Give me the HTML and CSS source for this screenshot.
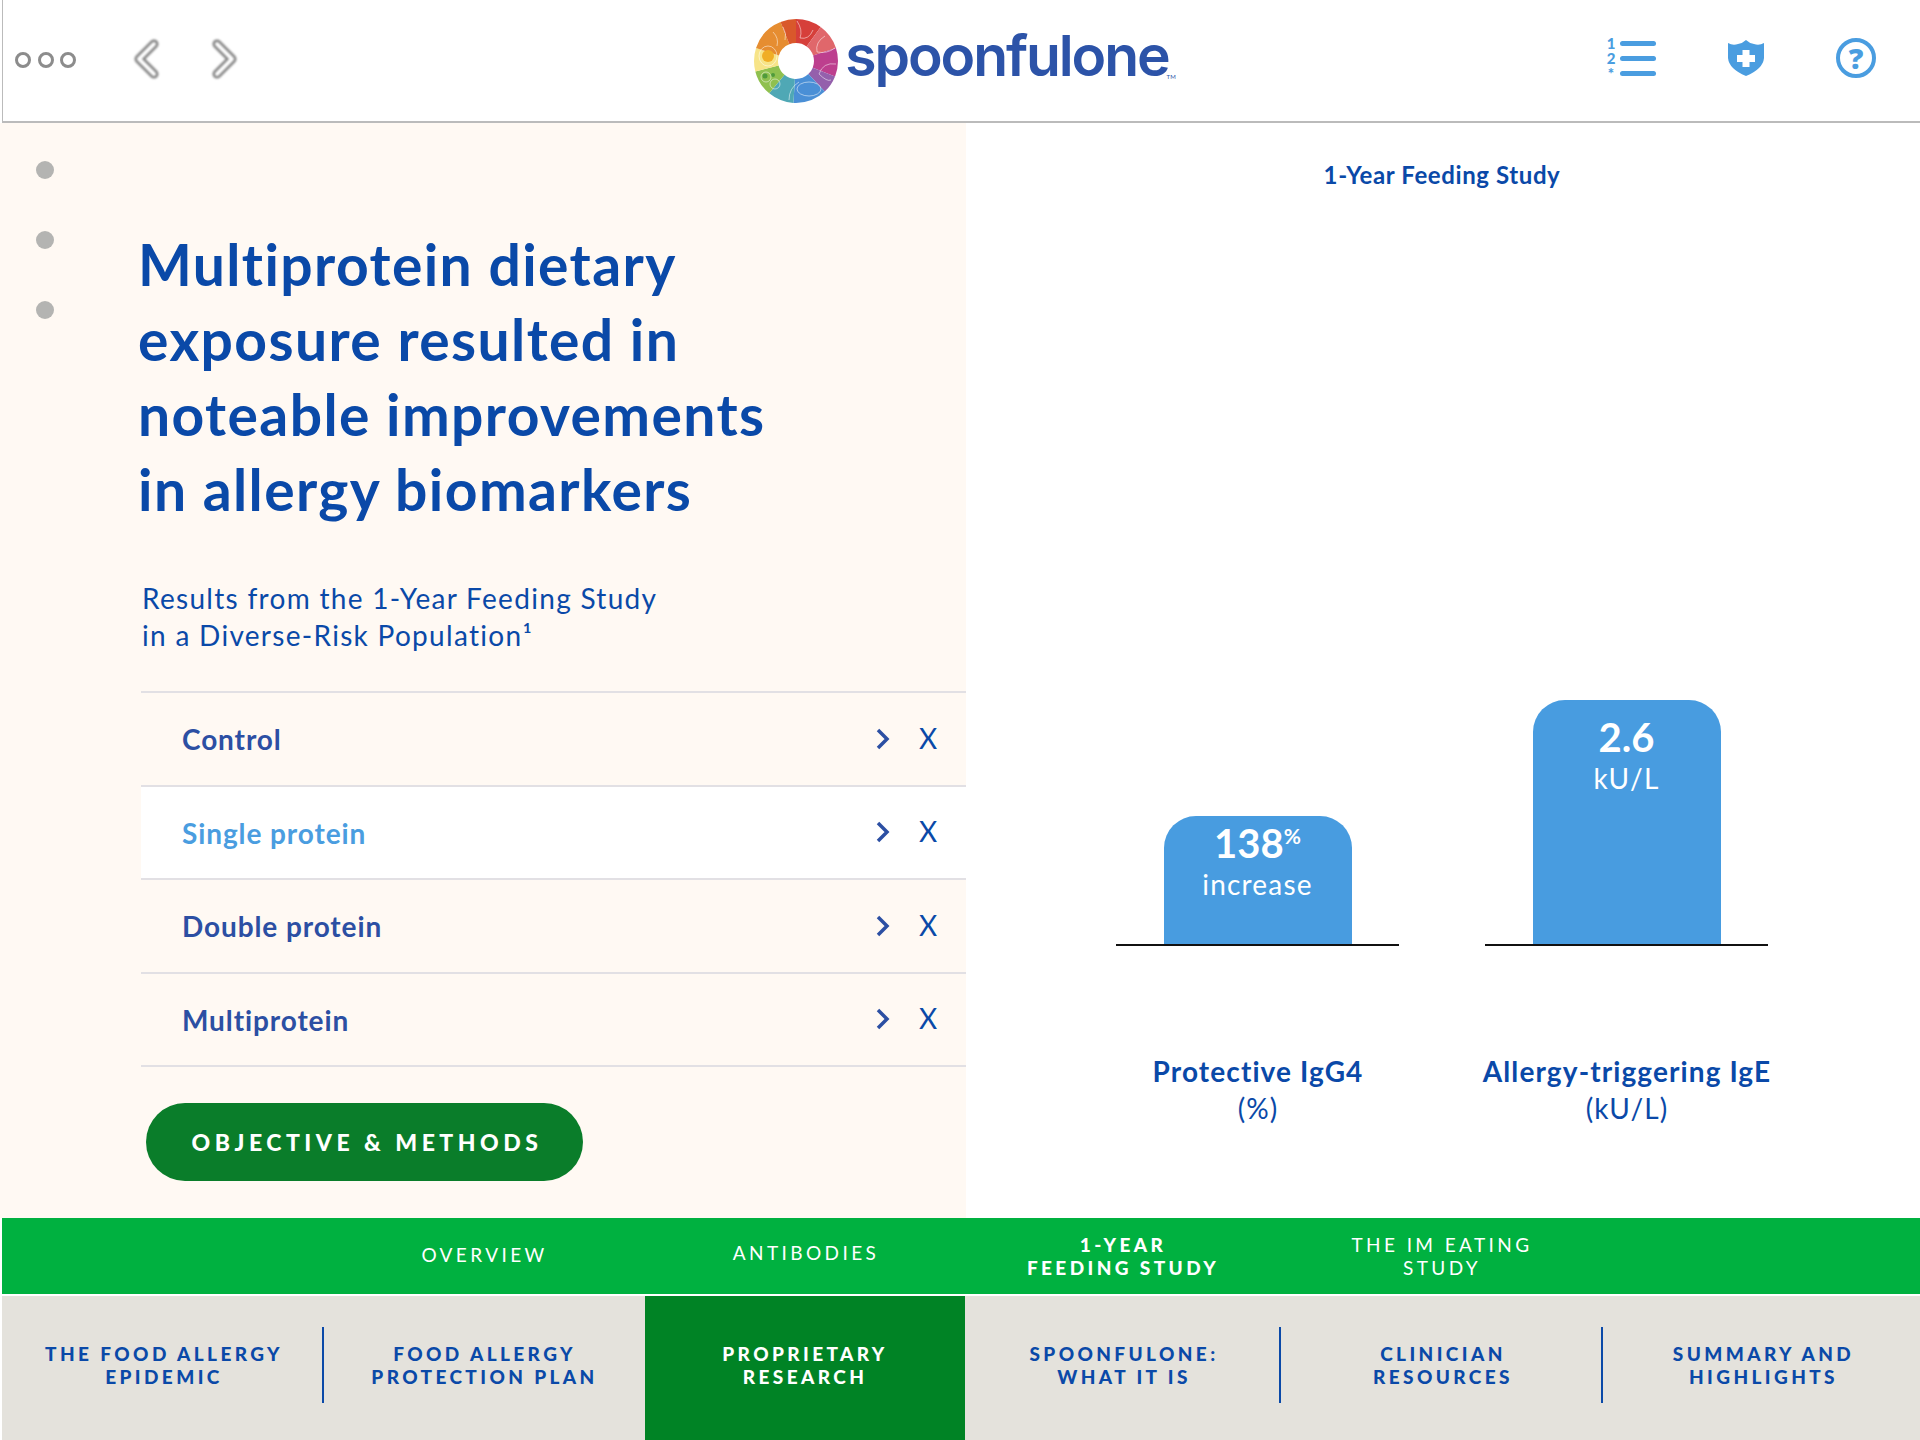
FILE: index.html
```html
<!DOCTYPE html>
<html lang="en">

<head>
  <meta charset="UTF-8">
  <meta name="viewport" content="width=device-width, initial-scale=1.0">
  <title>SpoonfulOne - 1-Year Feeding Study</title>
  <link rel="stylesheet" href="styles.css">
</head>

<body>

  <header class="top-bar">

    <div class="top-left">
      <svg class="dots-icon" width="62" height="18" viewBox="0 0 62 18">
        <circle cx="8" cy="9" r="6.5"></circle>
        <circle cx="31" cy="9" r="6.5"></circle>
        <circle cx="53" cy="9" r="6.5"></circle>
      </svg>
      <svg class="arrow-icon" width="30" height="44" viewBox="0 0 30 44">
        <polyline class="arrow-edge" points="23,6 8,21 23,36"></polyline>
        <polyline class="arrow-fill" points="23,6 8,21 23,36"></polyline>
      </svg>
      <svg class="arrow-icon" width="30" height="44" viewBox="0 0 30 44">
        <polyline class="arrow-edge" points="7,6 22,21 7,36"></polyline>
        <polyline class="arrow-fill" points="7,6 22,21 7,36"></polyline>
      </svg>
    </div>

    <div class="logo">
      <svg class="logo-ring" width="86" height="86" viewBox="0 0 86 86">
        <g fill="none" stroke-width="24" transform="rotate(-90 43 43)">
          <circle cx="43" cy="43" r="30" pathLength="100" stroke="#d63f3a" stroke-dasharray="10 90"></circle>
          <circle cx="43" cy="43" r="30" pathLength="100" stroke="#e0676b" stroke-dasharray="10 90" stroke-dashoffset="-10"></circle>
          <circle cx="43" cy="43" r="30" pathLength="100" stroke="#bd3f8e" stroke-dasharray="11 89" stroke-dashoffset="-20"></circle>
          <circle cx="43" cy="43" r="30" pathLength="100" stroke="#9460ac" stroke-dasharray="7 93" stroke-dashoffset="-31"></circle>
          <circle cx="43" cy="43" r="30" pathLength="100" stroke="#4a8fd6" stroke-dasharray="13 87" stroke-dashoffset="-38"></circle>
          <circle cx="43" cy="43" r="30" pathLength="100" stroke="#4fa8b5" stroke-dasharray="10 90" stroke-dashoffset="-51"></circle>
          <circle cx="43" cy="43" r="30" pathLength="100" stroke="#8fc04f" stroke-dasharray="10 90" stroke-dashoffset="-61"></circle>
          <circle cx="43" cy="43" r="30" pathLength="100" stroke="#f7e488" stroke-dasharray="9 91" stroke-dashoffset="-71"></circle>
          <circle cx="43" cy="43" r="30" pathLength="100" stroke="#e68d31" stroke-dasharray="14 86" stroke-dashoffset="-80"></circle>
          <circle cx="43" cy="43" r="30" pathLength="100" stroke="#d9582b" stroke-dasharray="6 94" stroke-dashoffset="-94"></circle>
        </g>
        <circle cx="15" cy="38" r="6" fill="#f0ae26"></circle>
        <circle cx="12" cy="58" r="2.500" fill="#4f9a3c"></circle>
        <circle cx="20" cy="57" r="2" fill="#4f9a3c"></circle>
        <g fill="none" stroke="#fff" stroke-opacity="0.5" stroke-width="1">
          <path d="M44 3 Q50 12 47 20 Q56 22 60 12"></path>
          <path d="M72 18 Q62 24 64 34 Q74 36 82 30"></path>
          <path d="M83 46 Q70 44 66 56 Q74 64 78 62"></path>
          <ellipse cx="56" cy="71" rx="12" ry="7"></ellipse>
          <path d="M46 64 Q36 70 36 82"></path>
          <path d="M20 14 Q26 20 24 28 M30 9 Q34 16 32 22"></path>
          <ellipse cx="15" cy="38" rx="9" ry="10"></ellipse>
          <circle cx="13" cy="59" r="5"></circle>
          <circle cx="22" cy="66" r="5"></circle>
        </g>
      </svg>
      <span class="logo-name">spoonfulone</span><span class="logo-tm">TM</span>
    </div>

    <div class="top-right">
      <div class="list-icon">
        <div class="list-row"><span class="list-mark">1</span><span class="list-line"></span></div>
        <div class="list-row"><span class="list-mark">2</span><span class="list-line"></span></div>
        <div class="list-row"><span class="list-mark">*</span><span class="list-line"></span></div>
      </div>
      <svg width="36" height="36" viewBox="0 0 36 36">
        <path fill="#4a9de0" d="M0 3 Q5 6 10 4 Q15 3 18 0 Q21 3 26 4 Q31 6 36 3 L36 18 Q35 29 18 36 Q1 29 0 18 Z"></path>
        <path fill="#fff" d="M14.500 10 H21.500 V15 H27 V22 H21.500 V27 H14.500 V22 H9 V15 H14.500 Z"></path>
      </svg>
      <div class="help-icon">?</div>
    </div>

  </header>

  <main class="content">

    <section class="left-panel">

      <div class="side-dots">
        <span class="side-dot"></span>
        <span class="side-dot"></span>
        <span class="side-dot"></span>
      </div>

      <div class="left-main">
        <h1 class="title">
          Multiprotein dietary<br>
          exposure resulted in<br>
          noteable improvements<br>
          in allergy biomarkers
        </h1>

        <p class="subtitle">
          Results from the 1-Year Feeding Study<br>
          in a Diverse-Risk Population&#185;
        </p>

        <ul class="groups">
          <li class="group">
            <span class="group-name">Control</span>
            <svg class="group-arrow" width="14" height="22" viewBox="0 0 14 22"><polyline points="2,2 11,11 2,20"></polyline></svg>
            <span class="group-x">X</span>
          </li>
          <li class="group group-active">
            <span class="group-name">Single protein</span>
            <svg class="group-arrow" width="14" height="22" viewBox="0 0 14 22"><polyline points="2,2 11,11 2,20"></polyline></svg>
            <span class="group-x">X</span>
          </li>
          <li class="group">
            <span class="group-name">Double protein</span>
            <svg class="group-arrow" width="14" height="22" viewBox="0 0 14 22"><polyline points="2,2 11,11 2,20"></polyline></svg>
            <span class="group-x">X</span>
          </li>
          <li class="group">
            <span class="group-name">Multiprotein</span>
            <svg class="group-arrow" width="14" height="22" viewBox="0 0 14 22"><polyline points="2,2 11,11 2,20"></polyline></svg>
            <span class="group-x">X</span>
          </li>
        </ul>

        <button class="methods-button">OBJECTIVE &amp; METHODS</button>
      </div>

    </section>

    <section class="right-panel">

      <p class="chart-title">1-Year Feeding Study</p>

      <div class="chart">

        <div class="chart-col">
          <div class="bar-area">
            <div class="bar" style="height: 128px">
              <span class="bar-value">138<sup class="bar-percent">%</sup></span>
              <span class="bar-unit">increase</span>
            </div>
          </div>
          <p class="chart-label"><b>Protective IgG4</b><br>(%)</p>
        </div>

        <div class="chart-col">
          <div class="bar-area">
            <div class="bar bar-tall" style="height: 244px">
              <span class="bar-value">2.6</span>
              <span class="bar-unit">kU/L</span>
            </div>
          </div>
          <p class="chart-label"><b>Allergy-triggering IgE</b><br>(kU/L)</p>
        </div>

      </div>

    </section>

  </main>

  <nav class="sub-nav">
    <span></span>
    <a class="sub-link sub-link-mid">OVERVIEW</a>
    <a class="sub-link sub-link-up">ANTIBODIES</a>
    <a class="sub-link sub-link-active">1-YEAR<br>FEEDING STUDY</a>
    <a class="sub-link">THE IM EATING<br>STUDY</a>
    <span></span>
  </nav>

  <nav class="main-nav">
    <div class="main-cell"><a class="main-link main-link-line">THE FOOD ALLERGY<br>EPIDEMIC</a></div>
    <div class="main-cell"><a class="main-link">FOOD ALLERGY<br>PROTECTION PLAN</a></div>
    <div class="main-cell main-cell-active"><a class="main-link">PROPRIETARY<br>RESEARCH</a></div>
    <div class="main-cell"><a class="main-link main-link-line">SPOONFULONE:<br>WHAT IT IS</a></div>
    <div class="main-cell"><a class="main-link main-link-line">CLINICIAN<br>RESOURCES</a></div>
    <div class="main-cell main-cell-last"><a class="main-link">SUMMARY AND<br>HIGHLIGHTS</a></div>
  </nav>

</body>

</html>
```

FILE: styles.css
```css
* {
  box-sizing: border-box;
}

body {
  margin: 0;
  height: 1440px;
  overflow: hidden;
  background-color: #fff;
  color: #0a49a8;
  font-family: "Lato", "Liberation Sans", sans-serif;
}

/* top bar */

.top-bar {
  display: grid;
  grid-template-columns: 1fr auto 1fr;
  align-items: center;
  height: 123px;
  margin-left: 2px;
  border-left: 1px solid #bbb;
  border-bottom: 2px solid #bbb;
}

.top-left {
  display: flex;
  align-items: center;
  padding: 0 0 2px 12px;
}

.dots-icon circle {
  fill: #fff;
  stroke: #8c8c8c;
  stroke-width: 3;
}

.arrow-icon {
  margin-left: 54px;
  filter: blur(1px);
}

.arrow-icon + .arrow-icon {
  margin-left: 49px;
}

.arrow-icon polyline {
  fill: none;
  stroke-linecap: round;
  stroke-linejoin: round;
}

.arrow-edge {
  stroke: #808080;
  stroke-width: 9;
}

.arrow-fill {
  stroke: #fff;
  stroke-width: 4;
}

.logo {
  display: flex;
  align-items: center;
  padding-left: 6px;
}

.logo-ring {
  margin-right: 6px;
}

.logo-name {
  margin-bottom: 10px;
  color: #2c53a8;
  font-family: "Inter", "Liberation Sans", sans-serif;
  font-size: 57px;
  font-weight: 600;
  letter-spacing: -2.1px;
  line-height: 70px;
}

.logo-tm {
  align-self: flex-end;
  margin-bottom: 24px;
  margin-left: -2px;
  color: #2c53a8;
  font-size: 6px;
}

.top-right {
  display: flex;
  align-items: center;
  justify-content: flex-end;
  gap: 72px;
  padding: 0 44px 5px 0;
}

.list-icon {
  display: flex;
  flex-direction: column;
  gap: 10px;
}

.list-row {
  display: flex;
  align-items: center;
  height: 5px;
}

.list-mark {
  width: 15px;
  padding-right: 3px;
  color: #4a9de0;
  font-size: 15px;
  font-weight: 900;
  text-align: center;
}

.list-line {
  width: 36px;
  height: 5px;
  border-radius: 3px;
  background-color: #4a9de0;
}

.help-icon {
  width: 40px;
  height: 40px;
  border: 4px solid #4a9de0;
  border-radius: 50%;
  color: #4a9de0;
  font-family: "Open Sans", sans-serif;
  font-size: 29px;
  font-weight: 800;
  line-height: 32px;
  text-align: center;
}

/* content */

.content {
  display: flex;
  height: 1095px;
}

.left-panel {
  display: flex;
  width: 966px;
  padding-left: 36px;
  background-color: #fff9f3;
}

.side-dots {
  display: flex;
  flex-direction: column;
  gap: 52px;
  padding-top: 38px;
}

.side-dot {
  width: 18px;
  height: 18px;
  border-radius: 50%;
  background-color: #b4b4b2;
}

.left-main {
  flex: 1;
  margin-left: 87px;
  padding-top: 104px;
}

.title {
  margin: 0 0 0 -3px;
  color: #0a49a8;
  font-size: 57px;
  font-weight: 700;
  letter-spacing: 1.4px;
  line-height: 75px;
}

.subtitle {
  margin: 53px 0 37px 1px;
  font-size: 28px;
  letter-spacing: 1.3px;
  line-height: 37px;
}

.groups {
  margin: 0;
  padding: 0;
  list-style: none;
  border-top: 2px solid #e2e0e4;
}

.group {
  display: flex;
  align-items: center;
  height: 93.5px;
  padding-left: 41px;
  border-bottom: 2px solid #e2e0e4;
}

.group-active {
  background-color: #fff;
}

.group-name {
  flex: 1;
  padding-top: 1px;
  color: #2c4fa3;
  font-size: 28px;
  font-weight: 700;
  letter-spacing: 0.9px;
}

.group-active .group-name {
  color: #4a9de0;
}

.group-arrow {
  margin-right: 29px;
}

.group-arrow polyline {
  fill: none;
  stroke: #2c4fa3;
  stroke-width: 3.5;
}

.group-x {
  width: 47px;
  margin-top: -2px;
  font-size: 28px;
}

.methods-button {
  display: block;
  width: 437px;
  height: 78px;
  margin: 36px 0 0 5px;
  padding: 0 0 0 5px;
  border: none;
  border-radius: 39px;
  background-color: #0a7d2a;
  color: #fff;
  font-family: inherit;
  font-size: 23px;
  font-weight: 900;
  letter-spacing: 4.5px;
}

.right-panel {
  flex: 1;
  padding: 37px 2px 0 0;
  text-align: center;
}

.chart-title {
  margin: 0;
  font-size: 24px;
  font-weight: 700;
  letter-spacing: 0.6px;
  line-height: 30px;
}

.chart {
  display: flex;
  justify-content: center;
  gap: 86px;
  margin-top: 326px;
}

.chart-col {
  width: 283px;
}

.bar-area {
  display: flex;
  align-items: flex-end;
  justify-content: center;
  height: 430px;
  border-bottom: 2px solid #111;
}

.bar {
  display: flex;
  flex-direction: column;
  align-items: center;
  width: 188px;
  padding-top: 4px;
  border-radius: 32px 32px 0 0;
  background-color: #489ce0;
  color: #fff;
}

.bar-tall {
  padding-top: 14px;
}

.bar-value {
  font-size: 40px;
  font-weight: 700;
  line-height: 46px;
}

.bar-percent {
  font-size: 21px;
  line-height: 0;
}

.bar-unit {
  font-size: 28px;
  letter-spacing: 1.2px;
  line-height: 36px;
}

.chart-label {
  width: 340px;
  margin: 107px 0 0 -28px;
  font-size: 28px;
  letter-spacing: 1.1px;
  line-height: 37px;
}

/* bottom navigation */

.sub-nav,
.main-nav {
  display: grid;
  grid-template-columns: 322px 321px 320px 316px 322px 1fr;
  margin-left: 2px;
  text-align: center;
}

.sub-nav {
  align-items: center;
  height: 76px;
  background-color: #00b140;
  color: #fff;
  font-size: 19px;
  letter-spacing: 3.4px;
  line-height: 23px;
}

.sub-link-mid {
  margin-top: -4px;
}

.sub-link-up {
  margin-top: -8px;
  padding-left: 2px;
}

.sub-link-active {
  font-weight: 900;
}

.main-nav {
  height: 144px;
  margin-top: 2px;
  background-color: #e4e2dc;
  font-size: 19px;
  font-weight: 900;
  letter-spacing: 3.4px;
  line-height: 23px;
}

.main-cell {
  padding-top: 31px;
}

.main-cell-active {
  background-color: #008325;
  color: #fff;
}

.main-cell-last {
  padding-left: 4px;
}

.main-link {
  display: flex;
  align-items: center;
  justify-content: center;
  height: 76px;
}

.main-link-line {
  padding-left: 4px;
  border-right: 2px solid #0a49a8;
}
```
